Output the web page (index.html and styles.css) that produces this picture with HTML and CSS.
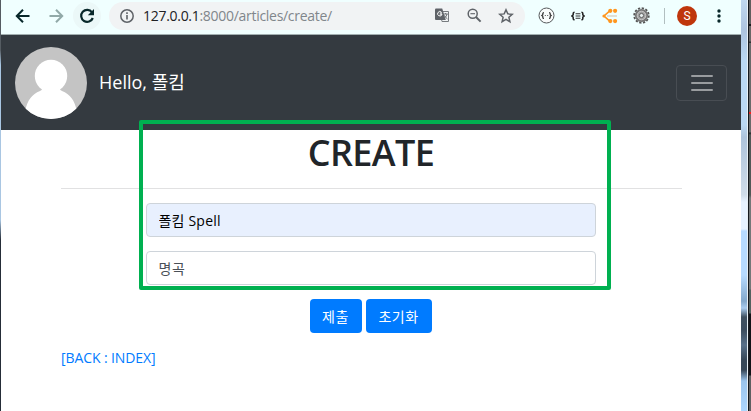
FILE: index.html
```html
<!DOCTYPE html>
<html lang="ko">
<head>
<meta charset="utf-8">
<title>Create</title>
<link rel="stylesheet" href="styles.css">
</head>
<body>
<div class="desktop">
  <div class="edge-left"></div>
  <main class="window">
    <header class="toolbar">
      <svg class="icon back" width="16" height="16" viewBox="0 0 16 16"><path d="M14.5 8H2M8 1.8 1.8 8 8 14.2" fill="none" stroke="#08282a" stroke-width="2"/></svg>
      <svg class="icon forward" width="16" height="16" viewBox="0 0 16 16"><path d="M1.5 8H14M8 1.8 14.2 8 8 14.2" fill="none" stroke="#91a9a8" stroke-width="2"/></svg>
      <div class="reload"><svg width="16" height="16" viewBox="0 0 16 16"><path d="M13 4.3A6 6 0 1 0 13.8 10" fill="none" stroke="#08282a" stroke-width="2.2"/><path d="M15 1v6.2H8.8z" fill="#08282a"/></svg></div>
      <div class="address">
        <svg class="info" width="14" height="14" viewBox="0 0 14 14"><circle cx="7" cy="7" r="6.2" fill="none" stroke="#5f6368" stroke-width="1.5"/><path d="M7 6v4.6M7 3.2v1.7" stroke="#5f6368" stroke-width="1.6"/></svg>
        <span class="url"><b>127.0.0.1</b>:8000/articles/create/</span>
        <svg class="translate" width="15" height="15" viewBox="0 0 15 15"><path d="M5 3.5h8.5v10H7z" fill="#f1f3f4" stroke="#777b7f"/><path d="M0 1.5Q0 .5 1 .5h6.2L10.800 12H1Q0 12 0 11z" fill="#5f6368"/><path d="M7 5H4.800M6.500 4.300A2.200 2.200 0 1 0 7 6.200H4.800" fill="none" stroke="#fff"/><path d="M8.500 6h4.300M10.600 5v1M12 6q-.5 2.500-2.500 4M9.500 7.500q1 2 3 3.500" fill="none" stroke="#6c7074"/></svg>
        <svg class="magnify" width="15" height="15" viewBox="0 0 15 15"><circle cx="5.7" cy="5.7" r="4.500" fill="none" stroke="#5f6368" stroke-width="1.5"/><path d="m9 9 4.600 4.600" stroke="#5f6368" stroke-width="2"/><path d="M3.400 5.700H8" stroke="#5f6368" stroke-width="1.1"/></svg>
        <svg class="star" width="16" height="16" viewBox="0 0 16 16"><path d="m8 1.800 1.800 4.100 4.500.4-3.400 3 1 4.400L8 11.400l-3.900 2.300 1-4.400-3.400-3 4.500-.4z" fill="none" stroke="#5f6368" stroke-width="1.5"/></svg>
      </div>
      <svg class="json" width="17" height="17" viewBox="0 0 17 17"><circle cx="8.5" cy="8.5" r="7.5" fill="#fafcfc" stroke="#55595b"/><path d="M6 5.6q-1.2 0-1.2 1v1.1l-1 .8 1 .8v1.1q0 1 1.2 1M11 5.6q1.2 0 1.2 1v1.1l1 .8-1 .8v1.1q0 1-1.2 1" fill="none" stroke="#333" stroke-width="1.2"/><path d="M6.8 8.5h1M9.2 8.5h1" stroke="#555"/></svg>
      <svg class="braces" width="14" height="10" viewBox="0 0 14 10"><path d="M3.6 1.2q-1.4 0-1.4 1.1v1.5L.8 5l1.400 1.200v1.500q0 1.100 1.400 1.100M10.400 1.200q1.400 0 1.400 1.100v1.500L13.200 5l-1.400 1.200v1.500q0 1.100-1.400 1.100" fill="none" stroke="#222" stroke-width="1.5"/><path d="M4.600 2.800h4.800M4.600 5h4.800M4.600 7.200h4.800" stroke="#333" stroke-width="1.1"/></svg>
      <svg class="share" width="16" height="16" viewBox="0 0 16 16"><g fill="#ff961e"><circle cx="8.3" cy="2.8" r="2.1"/><circle cx="13.1" cy="2.8" r="2.1"/><circle cx="8.3" cy="13.1" r="2.1"/><circle cx="13.1" cy="13.1" r="2.1"/><circle cx="2" cy="8" r="1.6"/></g><path d="M7.5 3.2 2 8l5.5 4.8" fill="none" stroke="#ff961e" stroke-width="1.6"/><path d="M5 8h10" stroke="#d9d3c5" stroke-width="1.4"/></svg>
      <svg class="gear" width="17" height="17" viewBox="0 0 17 17"><circle cx="8.5" cy="8.5" r="7.3" fill="none" stroke="#555" stroke-width="1.8" stroke-dasharray="2.3 1.52"/><circle cx="8.5" cy="8.5" r="6.6" fill="#777"/><circle cx="8.5" cy="8.5" r="4.3" fill="#a3a3a3" stroke="#c8c8c8"/><circle cx="8.5" cy="8.5" r="2.1" fill="#e7eeee" stroke="#626262"/></svg>
      <div class="divider"></div>
      <div class="profile">S</div>
      <svg class="more" width="4" height="14" viewBox="0 0 4 14"><g fill="#08282a"><circle cx="2" cy="2" r="1.7"/><circle cx="2" cy="7" r="1.7"/><circle cx="2" cy="12" r="1.7"/></g></svg>
    </header>
    <nav class="navbar">
      <svg class="avatar" width="72" height="72" viewBox="0 0 72 72"><defs><clipPath id="avatar-clip"><circle cx="36" cy="36" r="36"/></clipPath></defs><g clip-path="url(#avatar-clip)"><path fill="#c4c4c4" d="M0 0h72v72H0z"/><circle cx="36" cy="29" r="16.2" fill="#fff"/><path fill="#fff" d="M26 40q3 2-1 4C17 47 12 54 10.500 63v9h51v-9C60 54 55 47 47 44q-4-2-1-4z"/></g></svg>
      <span class="greeting">Hello, 폴킴</span>
      <button class="toggler" aria-label="Menu"><svg width="24" height="20" viewBox="0 0 24 20"><path d="M2 3h20M2 10h20M2 17h20" stroke="#999c9f" stroke-width="2" stroke-linecap="round"/></svg></button>
    </nav>
    <section class="content">
      <h1><span>CREATE</span></h1>
      <hr>
      <form>
        <input class="field filled" value="폴킴 Spell" aria-label="Title">
        <input class="field" value="명곡" aria-label="Content">
        <div class="actions"><button type="button">제출</button><button type="button">초기화</button></div>
      </form>
      <a class="back-link" href="#">[BACK : INDEX]</a>
    </section>
  </main>
  <div class="frame"></div>
  <div class="frame-line"></div>
  <div class="frame-shadow"></div>
  <div class="behind"></div>
  <div class="highlight"></div>
</div>
</body>
</html>
```

FILE: styles.css
```css
* { box-sizing: border-box; }
body {
  margin: 0;
  overflow: hidden;
  font-family: "Open Sans", "Noto Sans CJK KR", sans-serif;
}
svg { display: block; flex: none; }
.desktop { position: relative; display: flex; width: 751px; height: 411px; }
.edge-left { width: 1px; background: linear-gradient(#555c62 0 50px, #a9c6e2 65px 220px, #252d38 240px); }
.window { width: 740px; background: #fff; }
.toolbar {
  display: flex;
  align-items: center;
  height: 35px;
  padding: 0 0 3px 14px;
  background: #f0ffff;
  border-bottom: 1px solid #a2afb0;
}
.forward { margin-left: 17px; }
.reload {
  display: flex;
  align-items: center;
  justify-content: center;
  width: 28px;
  height: 28px;
  margin-left: 9px;
  border-radius: 50%;
  background: #ebf8f8;
}
.address {
  display: flex;
  align-items: center;
  width: 416px;
  height: 28px;
  margin-left: 8px;
  padding-left: 11px;
  border-radius: 14px;
  background: #f1f3f4;
}
.url { width: 292px; margin-left: 9px; color: #80868b; font-size: 14px; line-height: 20px; letter-spacing: -.29px; white-space: nowrap; }
.url b { color: #202124; font-weight: 400; }
.magnify { margin-left: 17px; }
.star { margin-left: 16px; }
.json { margin-left: 13px; }
.braces { margin-left: 16px; }
.share { margin-left: 17px; }
.gear { margin-left: 15px; }
.divider { width: 1px; height: 16px; margin-left: 14px; background: #b1bfc0; }
.profile {
  width: 20px;
  height: 20px;
  margin-left: 12px;
  border-radius: 50%;
  background: #bf360c;
  color: #fff;
  font: 12px/20px Roboto, sans-serif;
  text-align: center;
}
.more { margin-left: 20px; }
.navbar {
  display: flex;
  align-items: center;
  height: 95px;
  padding: 0 14px;
  background: #343a40;
}
.greeting { margin-left: 12px; padding-bottom: 3px; color: #fff; font-size: 18px; white-space: nowrap; }
.toggler {
  display: flex;
  align-items: center;
  justify-content: center;
  width: 51px;
  height: 36px;
  margin-left: auto;
  padding: 0;
  border: 1px solid #484d53;
  border-radius: 4px;
  background: none;
}
.content { padding: 0 59px 0 60px; }
h1 {
  height: 58px;
  margin: 0;
  color: #212529;
  font-size: 36px;
  font-weight: 600;
  line-height: 46px;
  text-align: center;
}
h1 span { margin-right: 1px; letter-spacing: -.6px; }
hr { height: 1px; margin: 0; border: 0; background: #e1e1e2; }
form { display: flex; flex-direction: column; align-items: center; gap: 14px; padding: 14px 2px 0 0; }
.field {
  width: 450px;
  height: 34px;
  padding: 0 12px 1px;
  border: 1px solid #ced4da;
  border-radius: 4px;
  background: #fff;
  color: #495057;
  font: 14px "Open Sans", "Noto Sans CJK KR", sans-serif;
  letter-spacing: .5px;
}
.filled { background: #e8f0fe; color: #000; letter-spacing: .2px; }
.actions { display: flex; gap: 4px; }
.actions button {
  width: 52px;
  height: 34px;
  padding: 0 0 1px;
  border: 0;
  border-radius: 4px;
  background: #007bff;
  color: #fff;
  font: 14px "Noto Sans CJK KR", sans-serif;
  letter-spacing: .5px;
}
.actions button + button { width: 66px; }
.back-link {
  display: block;
  width: max-content;
  margin-top: 14px;
  color: #007bff;
  font-size: 14px;
  line-height: 21px;
  letter-spacing: -.1px;
  text-decoration: none;
}
.frame { width: 6px; background: linear-gradient(#c0d8ef 0, #adc4df 30px, #bbd8f3 60px 125px, #aec4dc 137px, #d0dde9 195px, #e8f3ff 202px 229px, #b7dbff 231px 275px, #83a9cc 301px, #aacdf0 308px, #405160 317px, #3c4d5e 330px, #59718a 345px, #364757 360px 370px, #9bc5ed 381px, #add7ff); }
.frame-line { width: 1px; background: #e8f0f5; }
.frame-shadow { width: 1px; background: #15191e; }
.behind { width: 2px; background: linear-gradient(#605e5e 0 24px, #191b1e 24px 26px, #686766 26px 41px, #303234 42px 43px, #696a6a 43px 112px, #f02020 112px 114px, #696a6a 114px 132px, #222728 133px, #505856 135px 195px, #737878 198px 289px, #52615f 290px 313px, #111318 314px 375px, #5d6061 376px); }
.highlight {
  position: absolute;
  left: 139px;
  top: 120px;
  width: 472px;
  height: 170px;
  border: 4px solid #00b050;
  border-radius: 2px;
}
```
